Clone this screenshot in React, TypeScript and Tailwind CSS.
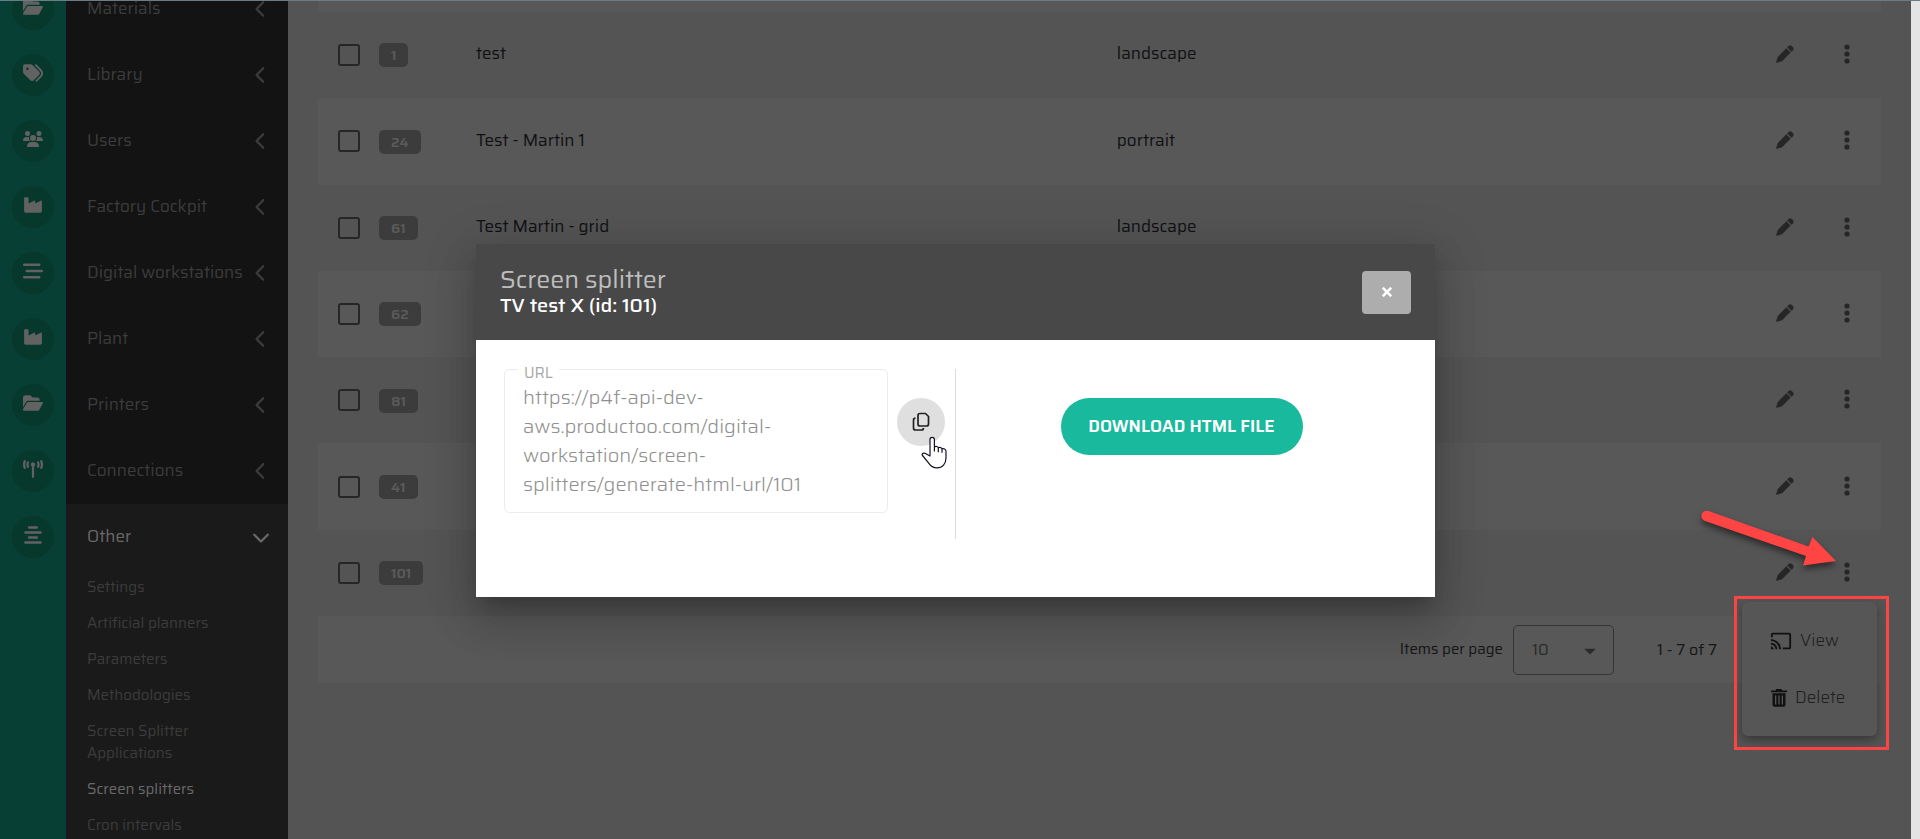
import { FaFolderOpen, FaTags, FaUsers, FaIndustry, FaBarsStaggered, FaTowerBroadcast, FaAlignCenter, FaChevronLeft, FaChevronDown } from "react-icons/fa6";
import { MdCast, MdArrowDropDown } from "react-icons/md";

const menu = [
  { label: "Materials", Icon: FaFolderOpen },
  { label: "Library", Icon: FaTags },
  { label: "Users", Icon: FaUsers },
  { label: "Factory Cockpit", Icon: FaIndustry },
  { label: "Digital workstations", Icon: FaBarsStaggered },
  { label: "Plant", Icon: FaIndustry },
  { label: "Printers", Icon: FaFolderOpen },
  { label: "Connections", Icon: FaTowerBroadcast },
  { label: "Other", Icon: FaAlignCenter, open: true },
];

const subItems = ["Settings", "Artificial planners", "Parameters", "Methodologies", "Screen Splitter Applications", "Screen splitters", "Cron intervals"];

const rows = [
  { id: 1, name: "test", layout: "landscape" },
  { id: 24, name: "Test - Martin 1", layout: "portrait" },
  { id: 61, name: "Test Martin - grid", layout: "landscape" },
  { id: 62 },
  { id: 81 },
  { id: 41 },
  { id: 101 },
];

function Pencil() {
  return (
    <svg viewBox="0 0 18 18" className="h-[18px] w-[18px]" fill="currentColor" aria-hidden="true">
      <path d="M10.300 3.200 14.700 7.600 6.300 16Q5.900 16.400 5.300 16.500L.9 17.800Q.1 17.900.2 17.100L1.500 12.700Q1.600 12.100 2 11.700zM11.100 2.400 12.600.9Q14.300-.4 16 1.200L16.900 2.100Q18.300 3.800 17 5.400L15.500 6.800z" />
    </svg>
  );
}

function Dots() {
  return (
    <svg viewBox="0 0 6 20" className="h-5 w-[6px]" fill="currentColor" aria-hidden="true">
      <circle cx="3" cy="3" r="2.600" />
      <circle cx="3" cy="10" r="2.600" />
      <circle cx="3" cy="17" r="2.600" />
    </svg>
  );
}

function Sidebar() {
  return (
    <aside className="flex w-72 shrink-0 overflow-hidden bg-[#131313]">
      <div className="-mt-[25px] flex w-[66px] shrink-0 flex-col bg-[#083f35]">
        {menu.map(({ label, Icon }) => (
          <div key={label} className="flex h-[66px] shrink-0 items-center justify-center">
            <span className="flex h-[42px] w-[42px] items-center justify-center rounded-full bg-[#06382c] pb-1 text-[#626262]">
              <Icon className="h-5 w-auto" />
            </span>
          </div>
        ))}
      </div>
      <nav className="-mt-[25px] flex min-w-0 flex-1 flex-col">
        {menu.map(({ label, open }) => (
          <button
            key={label}
            type="button"
            aria-expanded={!!open}
            className={
              open
                ? "flex h-[66px] shrink-0 items-center justify-between bg-[#1a1a1a] pr-[18px] pl-[21px] text-[#696969]"
                : "flex h-[66px] shrink-0 items-center justify-between pr-[18px] pl-[21px] text-[#3c3c3c]"
            }
          >
            <span className="whitespace-nowrap text-[17px]">{label}</span>
            {open ? <FaChevronDown size={18} /> : <FaChevronLeft size={18} />}
          </button>
        ))}
        <ul className="flex-1 bg-[#1a1a1a] pr-14 pl-[21px] text-[15px] leading-[22px] text-[#3c3c3c]">
          {subItems.map((s) => (
            <li key={s} className={s === "Screen splitters" ? "pt-[6px] pb-2 text-[#696969]" : "pt-[6px] pb-2"}>
              <a href="#">{s}</a>
            </li>
          ))}
        </ul>
      </nav>
    </aside>
  );
}

function RowsTable() {
  return (
    <table className="h-[604px] w-full table-fixed text-left text-[17px] text-[#111114]">
      <colgroup>
        <col className="w-[61px]" />
        <col className="w-[97px]" />
        <col className="w-[41%]" />
        <col />
        <col className="w-[68px]" />
        <col className="w-[37px]" />
      </colgroup>
      <tbody>
        {rows.map((r) => (
          <tr key={r.id} className="h-[86px] even:bg-[#585858]">
            <td className="pl-5">
              <input
                type="checkbox"
                aria-label={"Select row " + r.id}
                className="block h-[22px] w-[22px] appearance-none rounded-[3px] border-2 border-[#262626]"
              />
            </td>
            <td>
              <span className="inline-block rounded-[5px] bg-[#3c3c3c] px-3 text-sm leading-6 font-semibold text-[#5a5a5a]">{r.id}</span>
            </td>
            <td>
              <span className="block pb-[2px]">{r.name}</span>
            </td>
            <td>
              <span className="block pb-[2px]">{r.layout}</span>
            </td>
            <td className="text-[#262626]">
              <button type="button" aria-label="Edit" className="block pb-[2px]">
                <Pencil />
              </button>
            </td>
            <td className="text-[#262626]">
              <button type="button" aria-label="More actions" className="block pb-[2px]">
                <Dots />
              </button>
            </td>
          </tr>
        ))}
      </tbody>
    </table>
  );
}

function Paginator() {
  return (
    <footer className="flex h-[67px] items-center justify-end bg-[#585858] pr-[164px] text-[#161616]">
      <label htmlFor="page-size" className="text-[15px]">Items per page</label>
      <div className="relative ml-[10px]">
        <select id="page-size" defaultValue="10" className="block h-[50px] w-[101px] appearance-none rounded-[5px] border border-[#353535] pl-[18px] text-base text-[#2b2b2b]">
          <option>10</option>
          <option>25</option>
        </select>
        <MdArrowDropDown size={28} className="pointer-events-none absolute top-3 right-[10px] text-[#2b2b2b]" />
      </div>
      <span className="ml-[43px] text-base">1 - 7 of 7</span>
    </footer>
  );
}

function RowMenu() {
  return (
    <div className="absolute top-[595px] right-[22px] h-[154px] w-[155px] border-3 border-[#ff4444] px-[5px] py-[3px]">
      <div className="flex h-[134px] w-[135px] flex-col justify-center gap-[9px] rounded-md bg-[#565656] text-[17px] font-light text-[#1f1f1f] shadow-[0_4px_10px_rgba(0,0,0,0.35)]">
        <button type="button" className="flex h-12 items-center gap-2 pl-7">
          <MdCast size={22} className="text-[#111]" />
          View
        </button>
        <button type="button" className="flex h-12 items-center gap-2 pl-[29px]">
          <svg viewBox="0 0 16 18" className="h-[18px] w-4 text-[#111]" fill="currentColor" aria-hidden="true">
            <path fillRule="evenodd" d="M0 1.500h4.500L5.300 0h5.200l.8 1.500H16v1.800H0zM1.500 4.300h13V15.800a2 2 0 0 1-2 2h-9a2 2 0 0 1-2-2zM4 6.500v9h1.300v-9zM7.350 6.500v9h1.300v-9zM10.700 6.500v9h1.300v-9z" />
          </svg>
          Delete
        </button>
      </div>
    </div>
  );
}

function Arrow() {
  return (
    <svg viewBox="0 0 140 62" className="absolute top-[507px] right-[71px] h-[62px] w-[140px] overflow-visible drop-shadow-[0_4px_3px_rgba(0,0,0,0.5)]" aria-hidden="true">
      <path d="M8.500 3 108.500 38.500 112.500 29 136 53 103 57.500 106 48 5 13A5 5 0 0 1 8.500 3z" fill="#ff4444" />
    </svg>
  );
}

function Dialog() {
  return (
    <section
      role="dialog"
      aria-labelledby="dialog-title"
      className="absolute inset-x-0 top-[243px] mx-auto w-[959px] bg-white shadow-[0_11px_15px_-7px_rgba(0,0,0,0.2),0_24px_38px_3px_rgba(0,0,0,0.14),0_9px_46px_8px_rgba(0,0,0,0.12)]"
    >
      <header className="flex h-24 items-center justify-between bg-[#484848] px-6">
        <div className="pb-[2px]">
          <h2 id="dialog-title" className="text-[25px] leading-7 text-[#bdbdbd]">Screen splitter</h2>
          <p className="text-xl leading-[22px] font-medium text-white">TV test X (id: 101)</p>
        </div>
        <button type="button" aria-label="Close" className="flex h-[43px] w-[49px] items-center justify-center rounded bg-[#adadad] text-white">
          <svg viewBox="0 0 10 10" className="h-[10px] w-[10px]" stroke="currentColor" strokeWidth="2.600" aria-hidden="true">
            <path d="M.8.8 9.200 9.200M9.200.8.8 9.200" />
          </svg>
        </button>
      </header>
      <div className="flex h-[257px] pt-[29px]">
        <div className="flex h-[170px] w-[480px] shrink-0 border-r border-[#dcdcdc] pl-7">
          <div className="relative h-36 w-96">
            <label htmlFor="url" className="absolute -top-1 left-[14px] bg-white px-[6px] text-[15px] leading-4 text-[#a8a8a8]">URL</label>
            <textarea
              id="url"
              readOnly
              className="block h-36 w-96 resize-none overflow-hidden rounded-[5px] border border-[#ececec] px-[18px] pt-[13px] text-xl leading-[29px] font-light text-[#8f8f8f]"
              value={"https://p4f-api-dev-\naws.productoo.com/digital-\nworkstation/screen-\nsplitters/generate-html-url/101"}
            />
          </div>
          <button type="button" aria-label="Copy URL" className="relative mt-[29px] ml-[9px] flex h-12 w-12 items-center justify-center rounded-full bg-[#dfdfdf] text-[#222]">
            <svg viewBox="0 0 18 20" className="h-5 w-[18px]" fill="none" stroke="currentColor" strokeWidth="1.700" aria-hidden="true">
              <path d="M8 1.500h5.500l3 3V12a2 2 0 0 1-2 2H8a2 2 0 0 1-2-2V3.500a2 2 0 0 1 2-2zM3.500 6.200a2 2 0 0 0-2 2V16a2 2 0 0 0 2 2H9.500a2 2 0 0 0 2-2" />
            </svg>
            <svg viewBox="0 0 26 33" className="absolute top-[38px] left-6 h-[33px] w-[26px]" fill="#fff" stroke="#111122" strokeWidth="1.200" strokeLinejoin="round" aria-hidden="true">
              <path d="M9 20V3.500a2.200 2.200 0 0 1 4.400 0V11c1.300-1 3.300-.5 3.900.8 1.400-.9 3-.3 3.700 1 1.600-.6 4 .2 4 2.500v6.500c0 6-3.500 10-9 10-4 0-6.500-2-8.500-5L1.500 19.500c-1-1.500.5-3 2.500-2.200L9 20zM13.400 11v4.500M17.300 11.800v4.500M21 12.800v4" />
            </svg>
          </button>
        </div>
        <div className="flex flex-1 justify-center pt-[29px] pr-7">
          <button type="button" className="h-[57px] w-[242px] rounded-full bg-[#18b99c] text-[17px] font-semibold text-white">DOWNLOAD HTML FILE</button>
        </div>
      </div>
    </section>
  );
}

export default function App() {
  return (
    <div className="flex h-screen overflow-hidden border-t border-[#6c7c86] bg-[#e4e4e4] pr-[9px] font-[Saira,'Roboto','Liberation_Sans',sans-serif]">
      <div className="relative flex min-w-0 flex-1 overflow-hidden bg-[#545454]">
        <Sidebar />
        <main className="min-w-0 flex-1 pr-[30px] pl-[30px]">
          <div className="h-[11px] bg-[#585858]" />
          <RowsTable />
          <Paginator />
        </main>
        <RowMenu />
        <Arrow />
        <Dialog />
      </div>
    </div>
  );
}
